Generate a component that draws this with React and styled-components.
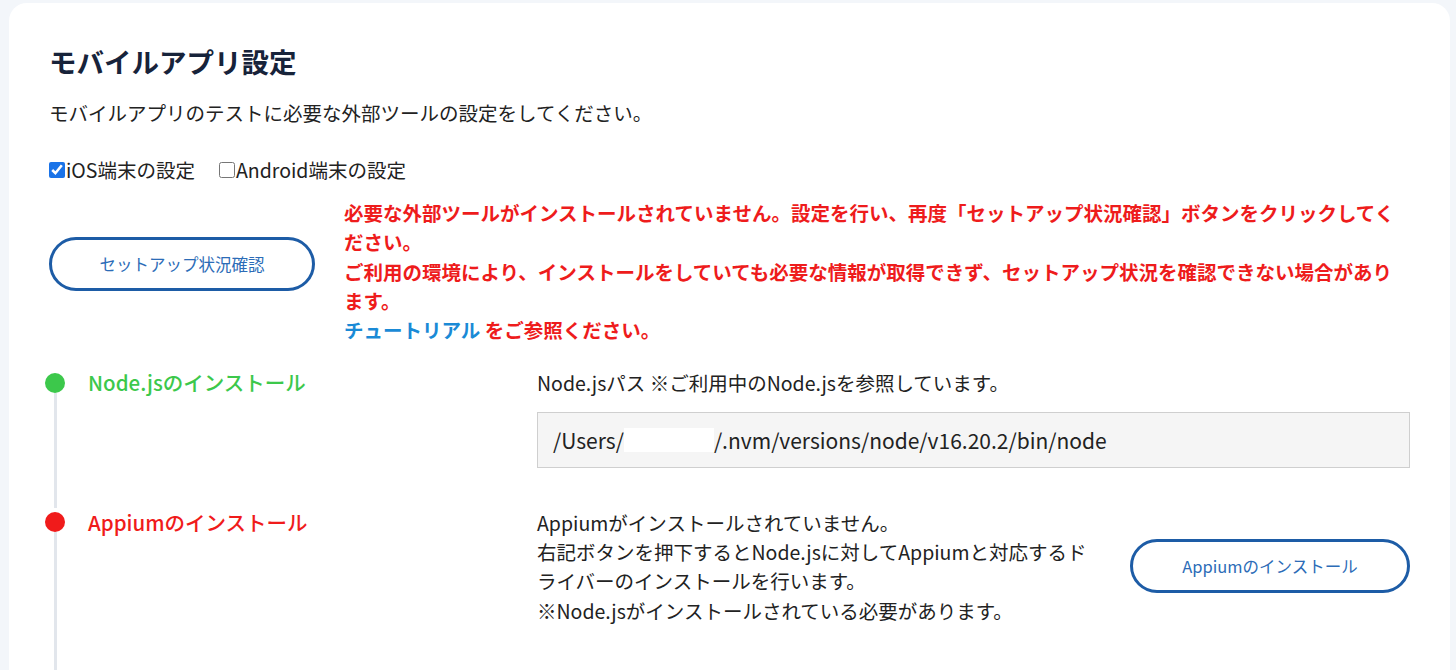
import React from "react";
import styled, { createGlobalStyle } from "styled-components";

const GlobalStyle = createGlobalStyle`
  html, body {
    margin: 0;
    padding: 0;
    background: #f3f6fa;
    font-family: "Noto Sans CJK JP", "Noto Sans", sans-serif;
    color: #222;
  }
`;

const Page = styled.div`
  padding: 3px 6px 0 9px;
  height: 670px;
  overflow: hidden;
  box-sizing: border-box;
`;

const Card = styled.main`
  background: #fff;
  border-radius: 18px 18px 0 0;
  padding: 39px 40px 0 40px;
  min-height: 720px;
  box-sizing: border-box;
`;

const Title = styled.h1`
  margin: 0;
  font-size: 27.5px;
  line-height: 38px;
  font-weight: 700;
  color: #17233a;
`;

const Lead = styled.p`
  margin: 19px 0 0;
  font-size: 19.5px;
  line-height: 27px;
  color: #222;
`;

const CheckRow = styled.div`
  display: flex;
  align-items: center;
  gap: 24px;
  margin-top: 30px;
  font-size: 19.5px;
  line-height: 27px;
  color: #222;
`;

const CheckLabel = styled.label`
  display: flex;
  align-items: center;
  input {
    margin: 0 1px 0 0;
    width: 16px;
    height: 16px;
    accent-color: #1a73e8;
  }
`;

const SetupRow = styled.section`
  display: flex;
  align-items: flex-start;
  gap: 29px;
  margin-top: 15px;
`;

const PillButton = styled.button`
  flex: none;
  width: ${(p) => p.$w}px;
  height: 54px;
  margin-top: ${(p) => p.$mt || 0}px;
  border: 3px solid #1d5ca6;
  border-radius: 27px;
  background: #fff;
  color: #2c6cb7;
  font-family: inherit;
  font-size: 16.5px;
  cursor: pointer;
`;

const Alert = styled.div`
  flex: 1;
  font-size: 19.5px;
  line-height: 29.3px;
  font-weight: 700;
  color: #ee1c1c;
`;

const Link = styled.a`
  color: #1a8ad6;
  text-decoration: none;
`;

const Steps = styled.div`
  margin: 24px 0 0 -4px;
`;

const Step = styled.div`
  display: grid;
  grid-template-columns: 20px 1fr 873px;
  column-gap: 23px;
  padding-bottom: ${(p) => p.$pb}px;
`;

const Marker = styled.div`
  display: flex;
  flex-direction: column;
  align-items: center;
  margin-bottom: -${(p) => p.$pb}px;
  padding-top: 4.6px;
`;

const Dot = styled.span`
  width: 20px;
  height: 20px;
  border-radius: 50%;
  background: ${(p) => p.$color};
  flex: none;
`;

const Line = styled.span`
  flex: 1;
  width: 3px;
  background: #e2e6ec;
`;

const StepTitle = styled.div`
  font-size: 20.5px;
  line-height: 29.3px;
  font-weight: 500;
  color: ${(p) => p.$color};
`;

const Body = styled.div`
  font-size: 19.5px;
  line-height: 29.3px;
  color: #222;
`;

const PathBox = styled.div`
  margin-top: 14.5px;
  height: 56px;
  box-sizing: border-box;
  border: 1px solid #cfcfcf;
  background: #f5f5f5;
  display: flex;
  align-items: center;
  padding-left: 15px;
  font-size: 21px;
  color: #222;
`;

const Masked = styled.span`
  display: inline-block;
  width: 90px;
  height: 24px;
  background: #fff;
`;

const ActionRow = styled.div`
  display: flex;
  align-items: center;
  gap: 30px;
`;

const ActionText = styled(Body)`
  flex: 1;
`;

export default function App() {
  return (
    <>
      <GlobalStyle />
      <Page>
        <Card>
          <Title>モバイルアプリ設定</Title>
          <Lead>モバイルアプリのテストに必要な外部ツールの設定をしてください。</Lead>
          <CheckRow>
            <CheckLabel>
              <input type="checkbox" defaultChecked />
              iOS端末の設定
            </CheckLabel>
            <CheckLabel>
              <input type="checkbox" />
              Android端末の設定
            </CheckLabel>
          </CheckRow>
          <SetupRow>
            <PillButton $w={266} $mt={39}>セットアップ状況確認</PillButton>
            <Alert>
              必要な外部ツールがインストールされていません。設定を行い、再度「セットアップ状況確認」ボタンをクリックしてください。
              <br />
              ご利用の環境により、インストールをしていても必要な情報が取得できず、セットアップ状況を確認できない場合があります。
              <br />
              <Link href="#">チュートリアル</Link> をご参照ください。
            </Alert>
          </SetupRow>
          <Steps>
            <Step $pb={39.5}>
              <Marker $pb={39.5}>
                <Dot $color="#3cc84b" />
                <Line />
              </Marker>
              <StepTitle $color="#3cc84b">Node.jsのインストール</StepTitle>
              <div>
                <Body>Node.jsパス ※ご利用中のNode.jsを参照しています。</Body>
                <PathBox>
                  /Users/<Masked />/.nvm/versions/node/v16.20.2/bin/node
                </PathBox>
              </div>
            </Step>
            <Step $pb={200}>
              <Marker $pb={200}>
                <Dot $color="#f01b1b" />
                <Line />
              </Marker>
              <StepTitle $color="#f01b1b">Appiumのインストール</StepTitle>
              <ActionRow>
                <ActionText>
                  Appiumがインストールされていません。
                  <br />
                  右記ボタンを押下するとNode.jsに対してAppiumと対応するドライバーのインストールを行います。
                  <br />
                  ※Node.jsがインストールされている必要があります。
                </ActionText>
                <PillButton $w={280}>Appiumのインストール</PillButton>
              </ActionRow>
            </Step>
          </Steps>
        </Card>
      </Page>
    </>
  );
}
